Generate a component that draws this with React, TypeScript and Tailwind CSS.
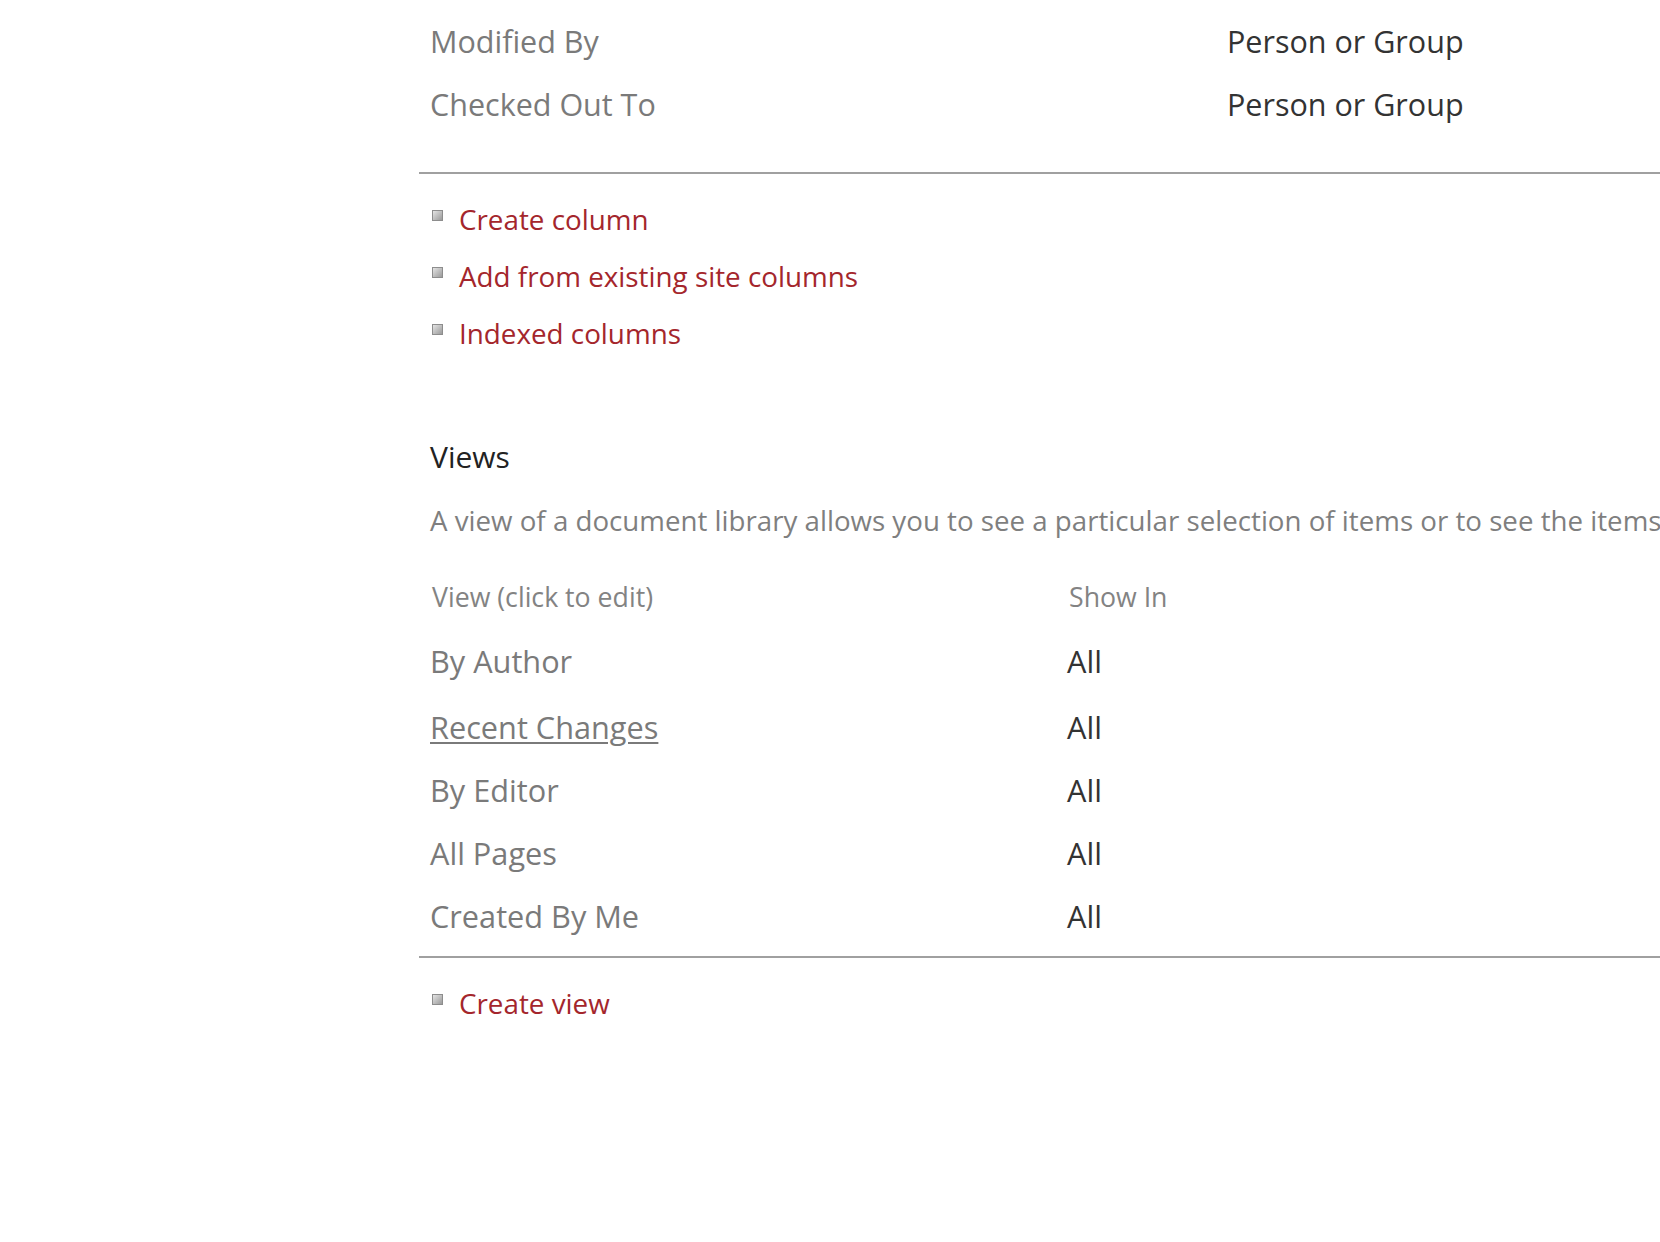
import React from "react";

const fields = [
  { name: "Modified By", type: "Person or Group" },
  { name: "Checked Out To", type: "Person or Group" },
];

const columnLinks = ["Create column", "Add from existing site columns", "Indexed columns"];

const views = [
  { name: "By Author", show: "All", current: false, h: "h-[70px] leading-[70px]" },
  { name: "Recent Changes", show: "All", current: true, h: "h-[63px] leading-[63px]" },
  { name: "By Editor", show: "All", current: false, h: "h-[63px] leading-[63px]" },
  { name: "All Pages", show: "All", current: false, h: "h-[63px] leading-[63px]" },
  { name: "Created By Me", show: "All", current: false, h: "h-[63px] leading-[63px]" },
];

function Bullet() {
  return (
    <span className="mt-[19px] block h-[11px] w-[11px] shrink-0 border border-[#8d8d8d] bg-[linear-gradient(135deg,#e4e4e4,#9a9a9a)]" />
  );
}

function LinkItem({ label }: { label: string }) {
  return (
    <li className="flex h-[57px] items-start gap-[16px] pl-[13px]">
      <Bullet />
      <a href="#" className="text-[27.8px] leading-[57px] text-[#a4262c] whitespace-nowrap">
        {label}
      </a>
    </li>
  );
}

export default function App() {
  return (
    <div className="min-h-screen w-full overflow-hidden bg-white font-['Open_Sans','Noto_Sans',sans-serif]">
      <div className="ml-[419px] pt-[10px]">
        {/* field rows */}
        <div className="pl-[11px]">
          {fields.map((f) => (
            <div key={f.name} className="grid h-[63px] grid-cols-[797px_1fr] text-[30.5px] leading-[63px] whitespace-nowrap">
              <span className="text-[#7a7a7a]">{f.name}</span>
              <span className="text-[#333333]">{f.type}</span>
            </div>
          ))}
        </div>

        <div className="mt-[36px] h-[2px] w-full bg-[#a0a0a0]" />

        <ul className="mt-[17px]">
          {columnLinks.map((l) => (
            <LinkItem key={l} label={l} />
          ))}
        </ul>

        {/* Views section */}
        <div className="pl-[11px]">
          <h2 className="mt-[75px] h-[40px] text-[30px] leading-[40px] text-[#222222]">Views</h2>
          <p className="mt-[23px] h-[40px] text-[27.7px] leading-[40px] text-[#7f7f7f] whitespace-nowrap">
            A view of a document library allows you to see a particular selection of items or to see the items sorted in a particular order.
          </p>

          <div className="mt-[37px] grid h-[40px] grid-cols-[637px_1fr] text-[26.7px] leading-[40px] text-[#838383]">
            <span className="pl-[2px]">View (click to edit)</span>
            <span className="pl-[2px]">Show In</span>
          </div>

          <div className="mt-[9px]">
            {views.map((v) => (
              <div key={v.name} className={`grid grid-cols-[637px_1fr] text-[30.7px] ${v.h}`}>
                <a
                  href="#"
                  className={
                    v.current
                      ? "text-[#7a7a7a] underline decoration-2 underline-offset-[3px]"
                      : "text-[#7a7a7a]"
                  }
                >
                  {v.name}
                </a>
                <span className="text-[#333333]">{v.show}</span>
              </div>
            ))}
          </div>
        </div>

        <div className="mt-[8px] h-[2px] w-full bg-[#a0a0a0]" />

        <ul className="mt-[17px]">
          <LinkItem label="Create view" />
        </ul>
      </div>
    </div>
  );
}
